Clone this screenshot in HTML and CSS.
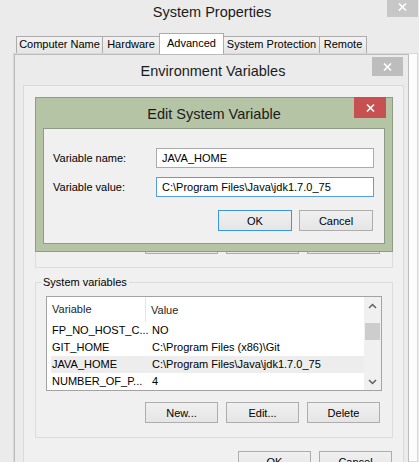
FILE: index.html
```
<!DOCTYPE html>
<html lang="en">
<head>
    <meta charset="UTF-8" />
    <title>Environment Variables</title>
    <link rel="stylesheet" href="styles.css">
</head>
<body>

    <!-- System Properties (back window) -->
    <div class="win sysprops">
        <div class="titlebar sys-titlebar">
            <span class="title">System Properties</span>
            <span class="close sys-close">
                <svg width="9" height="8" viewBox="0 0 9 8"><path d="M1 0.5 L8 7.5 M8 0.5 L1 7.5" stroke="#fff" stroke-width="1.6"/></svg>
            </span>
        </div>
        <div class="tabs">
            <div class="tab w-name">Computer Name</div>
            <div class="tab w-hw">Hardware</div>
            <div class="tab act w-adv">Advanced</div>
            <div class="tab w-sp">System Protection</div>
            <div class="tab w-rem">Remote</div>
        </div>
        <div class="tabpanel"></div>
    </div>

    <!-- Environment Variables -->
    <div class="win env">
        <div class="titlebar env-titlebar">
            <span class="title">Environment Variables</span>
            <span class="close env-close">
                <svg width="9" height="8" viewBox="0 0 9 8"><path d="M1 0.5 L8 7.5 M8 0.5 L1 7.5" stroke="#fff" stroke-width="1.6"/></svg>
            </span>
        </div>
        <div class="client env-client">
            <div class="group user-group">
                <span class="group-label">User variables for Admin</span>
                <div class="btn-row">
                    <button class="btn">New...</button>
                    <button class="btn">Edit...</button>
                    <button class="btn">Delete</button>
                </div>
            </div>

            <div class="group sys-group">
                <span class="group-label">System variables</span>
                <div class="list">
                    <div class="list-body">
                        <div class="list-head">
                            <div class="col1">Variable</div>
                            <div class="col2">Value</div>
                        </div>
                        <div class="row"><div class="col1">FP_NO_HOST_C...</div><div class="col2">NO</div></div>
                        <div class="row"><div class="col1">GIT_HOME</div><div class="col2">C:\Program Files (x86)\Git</div></div>
                        <div class="row sel"><div class="col1">JAVA_HOME</div><div class="col2">C:\Program Files\Java\jdk1.7.0_75</div></div>
                        <div class="row"><div class="col1">NUMBER_OF_P...</div><div class="col2">4</div></div>
                    </div>
                    <div class="scrollbar">
                        <div class="sb-btn">
                            <svg width="9" height="6" viewBox="0 0 9 6"><path d="M1 5 L4.5 1.5 L8 5" fill="none" stroke="#606060" stroke-width="1.5"/></svg>
                        </div>
                        <div class="sb-track"><div class="sb-thumb"></div></div>
                        <div class="sb-btn">
                            <svg width="9" height="6" viewBox="0 0 9 6"><path d="M1 1 L4.5 4.5 L8 1" fill="none" stroke="#606060" stroke-width="1.5"/></svg>
                        </div>
                    </div>
                </div>
                <div class="btn-row">
                    <button class="btn">New...</button>
                    <button class="btn">Edit...</button>
                    <button class="btn">Delete</button>
                </div>
            </div>

            <div class="btn-row env-foot">
                <button class="btn">OK</button>
                <button class="btn">Cancel</button>
            </div>
        </div>
    </div>

    <!-- Edit System Variable (active dialog) -->
    <div class="win edit">
        <div class="titlebar edit-titlebar">
            <span class="title">Edit System Variable</span>
            <span class="close edit-close">
                <svg width="9" height="8" viewBox="0 0 9 8"><path d="M1 0.5 L8 7.5 M8 0.5 L1 7.5" stroke="#fff" stroke-width="1.6"/></svg>
            </span>
        </div>
        <div class="client edit-client">
            <div class="form">
                <label class="lbl">Variable name:</label>
                <div class="field">JAVA_HOME</div>
                <label class="lbl">Variable value:</label>
                <div class="field focus">C:\Program Files\Java\jdk1.7.0_75</div>
            </div>
            <div class="btn-row edit-foot">
                <button class="btn btn-edit default">OK</button>
                <button class="btn btn-edit">Cancel</button>
            </div>
        </div>
    </div>

</body>
</html>
```

FILE: styles.css
```
body {
    margin: 0;
    padding: 0;
    width: 419px;
    height: 462px;
    overflow: hidden;
    position: relative;
    background-color: #ebebeb;
    font-family: "Liberation Sans", Arial, sans-serif;
    font-size: 11px;
    color: #000;
}

/* windows sit on a free desktop */
.win {
    position: absolute;
    box-sizing: border-box;
    display: flex;
    flex-direction: column;
}

.titlebar {
    position: relative;
    flex: none;
    text-align: center;
}

.title {
    font-size: 14.5px;
    color: #1b1b1b;
}

.close {
    position: absolute;
    display: flex;
    align-items: center;
    justify-content: center;
}

/* ---------- System Properties ---------- */
.sysprops {
    left: 0;
    top: 0;
    width: 419px;
    height: 462px;
    background-color: #ebebeb;
}

.sys-titlebar {
    height: 33px;
    line-height: 24px;
    padding-left: 5px;
}

.sys-close {
    top: 0;
    right: 1px;
    width: 31px;
    height: 17px;
    padding-bottom: 3px;
    box-sizing: border-box;
    background-color: #c7c7c7;
}

.tabs {
    display: flex;
    align-items: flex-end;
    height: 20px;
    padding-left: 16px;
    flex: none;
}

.tab {
    box-sizing: border-box;
    height: 17px;
    line-height: 15px;
    margin-left: -1px;
    text-align: center;
    border: 1px solid #acacac;
    border-bottom: none;
    background: linear-gradient(#f2f2f2, #e6e6e6);
}

.tab:first-child {
    margin-left: 0;
}

.tab.act {
    position: relative;
    z-index: 1;
    height: 21px;
    line-height: 18px;
    margin-bottom: -1px;
    background: #fff;
}

.w-name { width: 87px; }
.w-hw { width: 58px; }
.w-adv { width: 65px; }
.w-sp { width: 97px; }
.w-rem { width: 48px; }

.tabpanel {
    flex: 1;
    margin: 0 1px 0 13px;
    border: 1px solid #d9d9d9;
    background-color: #fcfcfc;
}

/* ---------- Environment Variables ---------- */
.env {
    left: 14px;
    top: 54px;
    width: 395px;
    height: 420px;
    border: 1px solid #bcbcbc;
    background-color: #ebebeb;
}

.env-titlebar {
    height: 30px;
    line-height: 32px;
    padding-left: 3px;
}

.env-close {
    top: 2px;
    right: 5px;
    width: 31px;
    height: 19px;
    background-color: #bdbdbd;
}

.client {
    box-sizing: border-box;
    background-color: #f0f0f0;
    border: 1px solid #dadada;
}

.env-client {
    flex: 1;
    margin: 0 4px 0 8px;
}

.group {
    position: relative;
    box-sizing: border-box;
    border: 1px solid #dcdcdc;
    margin: 0 10px 0 11px;
    display: flex;
    flex-direction: column;
    justify-content: flex-end;
}

.group-label {
    position: absolute;
    top: -8px;
    left: 5px;
    padding: 0 2px;
    line-height: 14px;
    background-color: #f0f0f0;
}

.user-group {
    height: 163px;
    margin-top: 19px;
    padding: 0 12px 13px 10px;
}

.sys-group {
    height: 156px;
    margin-top: 14px;
    padding: 13px 10px 14px 10px;
}

.btn-row {
    display: flex;
    justify-content: flex-end;
    gap: 8px;
}

.sys-group .btn-row {
    margin-top: 11px;
    padding-right: 2px;
}

.btn {
    box-sizing: border-box;
    width: 73px;
    height: 21px;
    padding: 0;
    font-family: inherit;
    font-size: 11px;
    color: #000;
    border: 1px solid #adadad;
    background: linear-gradient(#f0f0f0, #e5e5e5);
}

.env-foot {
    margin-top: 13px;
    padding-right: 11px;
}

/* list view */
.list {
    display: flex;
    box-sizing: border-box;
    height: 95px;
    border: 1px solid #a3a3a3;
    background-color: #fff;
}

.list-body {
    flex: 1;
}

.list-head {
    display: grid;
    grid-template-columns: 99px 1fr;
    height: 25px;
    align-items: center;
    color: #1e1e1e;
}

.list-head .col1 {
    height: 25px;
    line-height: 25px;
    padding-left: 5px;
    border-right: 1px solid #e5e5e5;
}

.list-head .col2 {
    padding-left: 5px;
}

.row {
    display: grid;
    grid-template-columns: 95px 1fr;
    height: 17px;
    line-height: 17px;
    margin-left: 4px;
    white-space: nowrap;
}

.row .col1 {
    padding-left: 1px;
}

.row .col2 {
    padding-left: 6px;
}

.row.sel {
    background-color: #ededed;
}

.scrollbar {
    width: 17px;
    display: flex;
    flex-direction: column;
    background-color: #f0f0f0;
}

.sb-btn {
    height: 17px;
    display: flex;
    align-items: center;
    justify-content: center;
}

.sb-track {
    flex: 1;
    padding: 9px 1px 0;
}

.sb-thumb {
    height: 17px;
    background-color: #cdcdcd;
}

/* ---------- Edit System Variable ---------- */
.edit {
    left: 35px;
    top: 97px;
    width: 358px;
    height: 155px;
    border: 1px solid #8d9c82;
    background-color: #b4c4a4;
}

.edit-titlebar {
    height: 30px;
    line-height: 32px;
}

.edit-close {
    top: -1px;
    right: 6px;
    width: 32px;
    height: 21px;
    background-color: #c75050;
}

.edit-client {
    flex: 1;
    margin: 0 7px 7px 7px;
    border-color: #8d9c82;
    padding: 19px 10px 0 9px;
}

.form {
    display: grid;
    grid-template-columns: 103px 218px;
    row-gap: 9px;
    align-items: center;
}

.field {
    box-sizing: border-box;
    height: 20px;
    line-height: 18px;
    padding-left: 5px;
    border: 1px solid #ababab;
    background-color: #fff;
    white-space: nowrap;
}

.field.focus {
    border-color: #569de5;
}

.edit-foot {
    margin-top: 13px;
    gap: 7px;
    padding-right: 1px;
}

.btn-edit {
    width: 74px;
}

.btn.default {
    border-color: #3c94e4;
}
```
